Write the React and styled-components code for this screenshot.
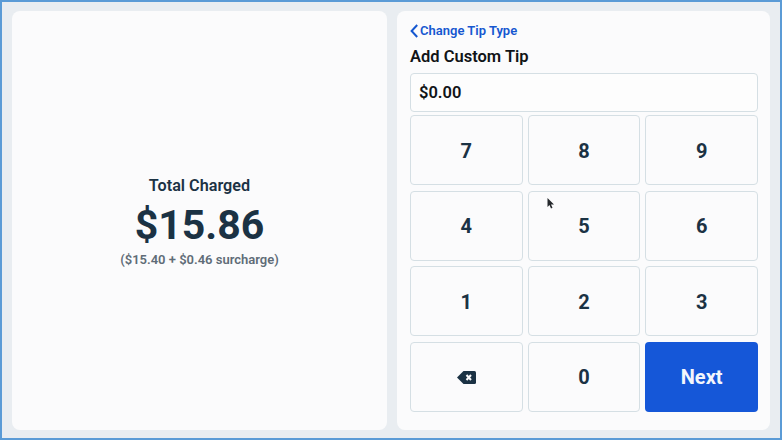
import React from "react";
import styled, { createGlobalStyle } from "styled-components";

const Global = createGlobalStyle`
  html, body { margin: 0; padding: 0; background: #5b9bd6; }
  body { font-family: Roboto, "Liberation Sans", sans-serif; }
  * { box-sizing: border-box; }
`;

const Frame = styled.div`
  position: relative;
  width: 782px;
  height: 440px;
  border: 2px solid #5b9bd6;
  background: #e9edf1;
  padding: 9px 10px 8px 10px;
  display: grid;
  grid-template-columns: 375px 373px;
  gap: 10px;
`;

const Panel = styled.section`
  background: #fbfbfc;
  border-radius: 8px;
  min-height: 0;
`;

const SummaryPanel = styled(Panel)`
  display: flex;
  flex-direction: column;
  align-items: center;
  justify-content: center;
  padding-top: 3px;
  color: #1b3244;
`;

const SummaryLabel = styled.div`
  font-size: 16.2px;
  line-height: 20px;
  font-weight: 600;
`;

const Amount = styled.div`
  font-size: 41px;
  line-height: 50px;
  font-weight: 700;
  margin-top: 4px;
`;

const Breakdown = styled.div`
  font-size: 13px;
  line-height: 16px;
  font-weight: 600;
  color: #5f6c77;
  margin-top: 2px;
`;

const TipPanel = styled(Panel)`
  padding: 13px 12px 18px 13px;
  display: flex;
  flex-direction: column;
`;

const BackLink = styled.a`
  display: flex;
  align-items: center;
  gap: 1px;
  height: 14px;
  font-size: 13px;
  line-height: 14px;
  font-weight: 600;
  color: #1557d0;
`;

const Heading = styled.h2`
  margin: 9px 0 0;
  font-size: 16.5px;
  line-height: 20px;
  font-weight: 600;
  color: #111417;
`;

const AmountField = styled.div`
  margin-top: 6px;
  height: 39px;
  display: flex;
  align-items: center;
  padding-left: 8px;
  background: #fdfdfd;
  border: 1.5px solid #d5dfe4;
  border-radius: 4px;
  font-size: 16.5px;
  font-weight: 600;
  color: #111417;
`;

const Keypad = styled.div`
  margin-top: 3px;
  flex: 1;
  display: grid;
  grid-template-columns: repeat(3, 1fr);
  grid-template-rows: repeat(4, 1fr);
  column-gap: 5px;
  row-gap: 5.5px;
`;

const Key = styled.button`
  display: flex;
  align-items: center;
  justify-content: center;
  padding: 1px 0 0;
  border-radius: 4px;
  border: ${(p) => (p.$primary ? "none" : "1.5px solid #d5dfe4")};
  background: ${(p) => (p.$primary ? "#1557d8" : "#fbfbfc")};
  color: ${(p) => (p.$primary ? "#f3f6fc" : "#1b3244")};
  font-family: inherit;
  font-size: 20px;
  font-weight: 700;
`;

const Cursor = styled.svg`
  position: absolute;
  left: 544px;
  top: 195px;
`;

const Chevron = () => (
  <svg width="9" height="14" viewBox="0 0 9 14" fill="none">
    <path d="M7.2 1 1.6 7l5.6 6" stroke="#1557d0" strokeWidth="2" />
  </svg>
);

const BackspaceIcon = () => (
  <svg width="19" height="13" viewBox="0 0 19 13">
    <path d="M6.5 0H17.5A1.5 1.5 0 0 1 19 1.5v10a1.5 1.5 0 0 1-1.5 1.5H6.5L0 6.5Z" fill="#1b3244" />
    <path d="m9.5 4 4.5 5m0-5-4.5 5" stroke="#fbfbfc" strokeWidth="2" />
  </svg>
);

const digits = ["7", "8", "9", "4", "5", "6", "1", "2", "3"];

export default function App() {
  return (
    <>
      <Global />
      <Frame>
        <SummaryPanel>
          <SummaryLabel>Total Charged</SummaryLabel>
          <Amount>$15.86</Amount>
          <Breakdown>($15.40 + $0.46 surcharge)</Breakdown>
        </SummaryPanel>
        <TipPanel>
          <BackLink>
            <Chevron />
            Change Tip Type
          </BackLink>
          <Heading>Add Custom Tip</Heading>
          <AmountField>$0.00</AmountField>
          <Keypad>
            {digits.map((d) => (
              <Key key={d}>{d}</Key>
            ))}
            <Key aria-label="Backspace">
              <BackspaceIcon />
            </Key>
            <Key>0</Key>
            <Key $primary>Next</Key>
          </Keypad>
        </TipPanel>
        <Cursor width="9" height="13" viewBox="0 0 9 13">
          <path d="M1.5 1v9l2-2 1.5 3.5 1.5-.7L5 7.5h3Z" fill="#25282c" />
        </Cursor>
      </Frame>
    </>
  );
}
